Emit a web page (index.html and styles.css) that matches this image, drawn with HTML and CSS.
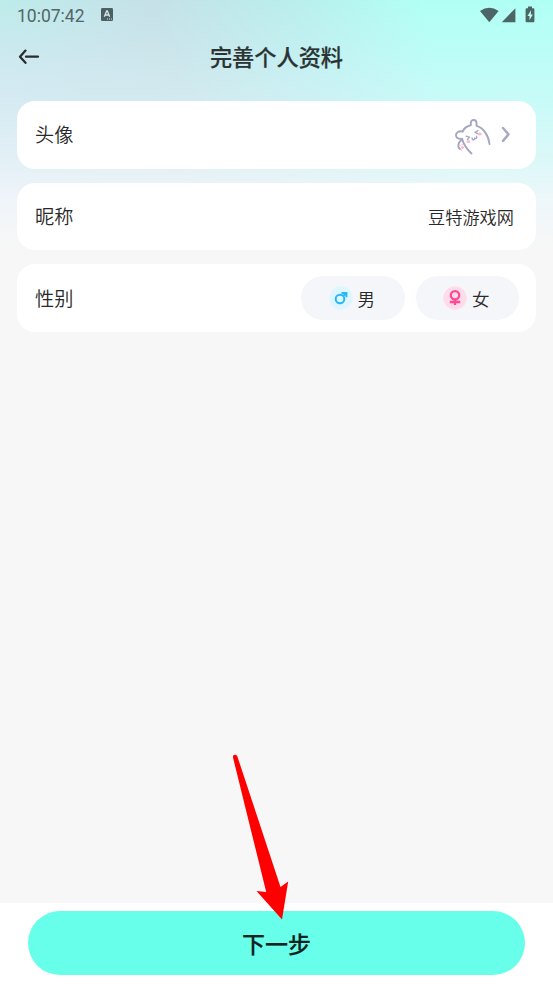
FILE: index.html
```html
<!DOCTYPE html>
<html lang="zh-CN">
<head>
<meta charset="utf-8">
<meta name="viewport" content="width=device-width, initial-scale=1">
<title>完善个人资料</title>
<link rel="stylesheet" href="styles.css">
</head>
<body>
<div class="screen">
  <div class="status">
    <span class="time">10:07:42</span>
    <svg class="keyboard" width="12" height="13" viewBox="0 0 12 13"><rect width="12" height="13" rx="1.3" fill="#4c6064"/><path d="M3.3 8.8 5.7 3h.6l2.4 5.8M4.3 7h3.5" fill="none" stroke="#d5e8eb" stroke-width="1.3"/><path d="M6 11h1M8 11h1M10 11h1" stroke="#d5e8eb"/></svg>
    <svg class="signals" width="57" height="18" viewBox="0 0 57 18" fill="#4b6665"><path d="M0 5.100Q9.300-1.800 18.600 5.100L9.300 16.200z"/><path d="M35.400 2.200v14H21.800z"/><path d="M48 .4h4v1.800h1.400q1 0 1 1v12q0 1-1 1H46.600q-1 0-1-1v-12q0-1 1-1H48z"/><path d="M51.100 4.200 47.500 10h2v4.200l3.300-5.800h-2z" fill="#bdfff6"/></svg>
  </div>
  <header class="nav">
    <svg class="back" width="22" height="18" viewBox="0 0 22 18" fill="none" stroke="#292d2e" stroke-width="2.300" stroke-linecap="round" stroke-linejoin="round"><path d="M7.500 2.600 2 8.700l5.500 6.100M8 8.700h12"/></svg>
    <h1>完善个人资料</h1>
  </header>
  <main class="cards">
    <section class="card">
      <span class="label">头像</span>
      <svg class="avatar" width="38" height="38" viewBox="0 0 38 38" fill="none" stroke="#a4a7bf" stroke-width="1.900" stroke-linecap="round" stroke-linejoin="round">
        <path d="M8.500 13.500C10 10.500 13 8 16.800 7.200V4.800C16.800 1 22.500 1 22.500 4.800V7.800C29 9.500 34.500 17 35.500 26"/>
        <path d="M8.500 13.500C4.500 12.500 1.500 15 2 17.700 2.400 20.500 5 21.300 8 20.600 9.500 26.500 12.500 31 17.500 35.500M8 21.800C5.500 23 4 26 4.500 29.500L6 31"/>
        <path d="M12.200 18.200l3.200 1-1.900 2.500M23.800 12.600l-2.900 1.900 2.900 1.200M18 19.900c.3 3 2.900 2.500 2.600.2 1.700 1.200 2.900-.4 1.800-1.800" stroke-width="1.350"/>
        <g fill="#ffb9c8" stroke="none"><ellipse cx="14.300" cy="23.700" rx="1.900" ry="1.400"/><ellipse cx="25.800" cy="15.900" rx="2" ry="1.500"/><circle cx="8.500" cy="29.500" r="1.400"/><circle cx="6.100" cy="27.600" r=".7"/><circle cx="8.200" cy="26.400" r=".7"/><circle cx="7.600" cy="32.200" r=".7"/></g>
      </svg>
      <svg class="chevron" width="10" height="17" viewBox="0 0 10 17" fill="none" stroke="#a8abc0" stroke-width="2.400" stroke-linecap="round" stroke-linejoin="round"><path d="M2 2l5.500 6.400L2 14.900"/></svg>
    </section>
    <section class="card">
      <span class="label">昵称</span>
      <span class="nickname">豆特游戏网</span>
    </section>
    <section class="card">
      <span class="label">性别</span>
      <div class="choices">
        <button class="choice" type="button">
          <svg width="24" height="24" viewBox="0 0 24 24" fill="none" stroke="#26b8f3" stroke-width="2"><circle cx="12" cy="12" r="11.700" fill="#dff5ff" stroke="none"/><circle cx="11" cy="13" r="4.300"/><path d="M14.200 9.800 17 7.500M12.500 6.900h4.900v4.400"/></svg>
          <span>男</span>
        </button>
        <button class="choice" type="button">
          <svg width="24" height="24" viewBox="0 0 24 24" fill="none" stroke="#ff4994" stroke-width="2.300"><circle cx="12" cy="12" r="11.700" fill="#ffdce9" stroke="none"/><circle cx="12" cy="9.300" r="4.200"/><path d="M12 13.500v5.400M6.800 16h10.400"/></svg>
          <span>女</span>
        </button>
      </div>
    </section>
  </main>
  <footer class="footer">
    <button class="next" type="button">下一步</button>
  </footer>
  <svg class="pointer" width="60" height="170" viewBox="0 0 60 170" fill="red"><path d="M3 7.500C2.400 4.300 6.400 3.500 7.400 6.500L50.500 137 58.200 131.500 52 169.500 26.500 141 36.200 142z"/></svg>
</div>
</body>
</html>
```

FILE: styles.css
```css
* { box-sizing: border-box; }
body {
  margin: 0;
  font-family: Roboto, "Noto Sans CJK SC", sans-serif;
  color: #292929;
}
button {
  border: 0;
  padding: 0;
  font: inherit;
  color: inherit;
}
svg { display: block; flex: none; }
.screen {
  position: relative;
  display: flex;
  flex-direction: column;
  height: 984px;
  overflow: hidden;
  background:
    linear-gradient(180deg, rgba(247,247,247,0) 0, rgba(235,246,252,.15) 40px, rgba(232,245,252,.42) 100px, rgba(237,245,250,.72) 160px, rgba(243,246,251,.92) 200px, #f7f7f7 250px),
    radial-gradient(ellipse 150px 90px at 0 0, #bdebea, rgba(189,235,234,0)),
    linear-gradient(80deg, #c8e3ec 0, #c4e1e7 33%, #b9efee 58%, #b0fff5 78%, #b0fff5 100%);
  background-size: 100% 250px;
  background-repeat: no-repeat;
  background-color: #f7f7f7;
}
.status {
  display: flex;
  align-items: center;
  height: 30px;
  padding: 0 17px;
}
.time {
  width: 84px;
  font-size: 17.5px;
  line-height: 30px;
  color: #536568;
  padding-top: 1px;
}
.keyboard { margin-bottom: 1px; }
.signals { margin: 0 -1px 1px auto; }
.nav {
  display: grid;
  grid-template-columns: 40px 1fr 40px;
  align-items: center;
  height: 54px;
  padding: 0 18px;
}
h1 {
  margin: 0;
  padding-top: 2px;
  text-align: center;
  font-size: 22.2px;
  line-height: 32px;
  font-weight: 500;
  color: #2b3333;
  -webkit-text-stroke: .2px #2b3333;
}
.cards {
  display: grid;
  gap: 14px;
  padding: 17px 17px 0;
}
.card {
  display: flex;
  align-items: center;
  height: 67.700px;
  padding: 0 17px 0 18px;
  border-radius: 18px;
  background: #fff;
}
.label {
  margin-right: auto;
  padding-top: 3px;
  font-size: 19.2px;
  font-weight: 350;
  line-height: 28px;
}
.avatar { margin: 4px 9px 0 0; }
.chevron { margin-right: 8px; }
.nickname {
  margin-right: 5px;
  font-size: 17.2px;
  font-weight: 350;
}
.choices { display: flex; gap: 11px; }
.choice {
  display: flex;
  align-items: center;
  justify-content: center;
  gap: 5px;
  width: 103.500px;
  height: 44px;
  padding-right: 2px;
  border-radius: 22px;
  background: #f5f6fa;
  font-size: 17.5px;
  font-weight: 350;
}
.footer {
  height: 81px;
  margin-top: auto;
  padding: 8px 28px 0;
  background: #fff;
}
.next {
  display: block;
  width: 100%;
  height: 64px;
  border-radius: 32px;
  background: #67ffe9;
  color: #102321;
  font-size: 23px;
  font-weight: 500;
  -webkit-text-stroke: .2px #102321;
}
.pointer {
  position: absolute;
  left: 230px;
  top: 750px;
}
```
